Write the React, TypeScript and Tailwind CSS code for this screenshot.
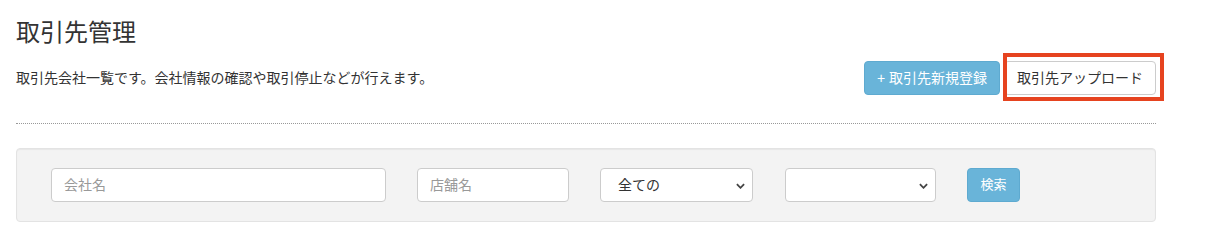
import type { ReactNode } from 'react';

const FONT = { fontFamily: '"Liberation Sans", "Noto Sans CJK JP", sans-serif' };

export default function App() {
  return (
    <div className="min-h-[252px] w-[1231px] bg-white text-[#333]" style={FONT}>
      <div className="ml-4 w-[1140px]">
        <h1 className="pt-5 text-[24px] leading-[26px] font-normal">取引先管理</h1>

        <div className="mt-[15px] flex h-[34px] items-center justify-between">
          <p className="text-[14px] leading-5">取引先会社一覧です。会社情報の確認や取引停止などが行えます。</p>
          <div className="flex items-center">
            <button className="h-[34px] rounded border border-[#5eaad0] bg-[#69b4d9] px-3 text-[14px] text-white">
              + 取引先新規登録
            </button>
            <span className="relative ml-1">
              <button className="h-[34px] rounded border border-[#ccc] bg-white px-3 text-[14px] text-[#333]">
                取引先アップロード
              </button>
              <Highlight />
            </span>
          </div>
        </div>

        <div className="mt-[28px] border-t border-dotted border-[#999]" />

        <div className="mt-6 rounded border border-[#e3e3e3] bg-[#f3f3f3] p-[19px] shadow-[inset_0_1px_1px_rgba(0,0,0,0.05)]">
          <div className="flex items-center pl-[15px]">
            <TextInput placeholder="会社名" className="w-[335px]" />
            <TextInput placeholder="店舗名" className="ml-[31px] w-[152px]" />
            <Select className="ml-[31px] w-[153px]">全ての</Select>
            <Select className="ml-[32px] w-[151px]" />
            <button className="ml-[31px] h-[34px] w-[53px] rounded border border-[#5eaad0] bg-[#69b4d9] text-[13px] text-white">
              検索
            </button>
          </div>
        </div>
      </div>
    </div>
  );
}

// red annotation frame drawn over the upload button
function Highlight() {
  return <div className="pointer-events-none absolute -top-2 -right-2 -bottom-1.5 -left-px border-4 border-[#e6431f]" />;
}

function TextInput({ placeholder, className }: { placeholder: string; className?: string }) {
  return (
    <input
      placeholder={placeholder}
      className={`h-[34px] rounded border border-[#ccc] bg-white px-3 text-[14px] placeholder:text-[#999] ${className ?? ''}`}
      style={FONT}
    />
  );
}

function Select({ children, className }: { children?: ReactNode; className?: string }) {
  return (
    <div className={`relative flex h-[34px] items-center rounded border border-[#ccc] bg-white pl-[17px] text-[14px] text-[#333] ${className ?? ''}`}>
      <span>{children}</span>
      <svg viewBox="0 0 10 6" className="absolute right-[7px] top-[14px] h-[6px] w-[9px]" fill="none" stroke="#444" strokeWidth={2}>
        <path d="M1 1l4 4 4-4" />
      </svg>
    </div>
  );
}
